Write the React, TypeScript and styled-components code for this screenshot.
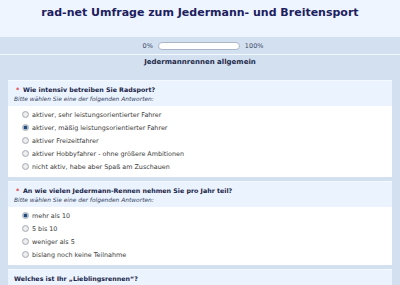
import React from "react";
import styled, { createGlobalStyle } from "styled-components";

const Global = createGlobalStyle`
  html, body { margin: 0; padding: 0; }
  body {
    background: #d3e0f0;
    font-family: "DejaVu Sans", Verdana, sans-serif;
    width: 400px;
    height: 285px;
    overflow: hidden;
  }
`;

const Header = styled.header`
  height: 37px;
  background: #eef5fe;
  display: flex;
  align-items: flex-start;
  justify-content: center;
`;

const Title = styled.h1`
  margin: 0;
  padding-top: 6px;
  font-size: 11px;
  line-height: 14px;
  font-weight: bold;
  color: #1c205e;
`;

const ProgressBand = styled.div`
  height: 17px;
  border-bottom: 1px solid #f4f8fd;
  display: flex;
  align-items: center;
  justify-content: center;
  gap: 5px;
  padding-left: 6px;
  font-size: 6.5px;
  color: #3d4a66;
`;

const Bar = styled.div`
  width: 80px;
  height: 6px;
  border: 1px solid #a9b7c9;
  border-radius: 4px;
  background: #fff;
`;

const SectionTitle = styled.div`
  height: 14px;
  line-height: 14px;
  text-align: center;
  font-size: 7px;
  font-weight: bold;
  color: #1e2a4a;
`;

const Cards = styled.div`
  padding: 11px 8px 0 8px;
  display: flex;
  flex-direction: column;
  gap: 4px;
`;

const Card = styled.section`
  background: #fff;
`;

const QHead = styled.div`
  background: #ebf4fe;
  padding: 3px 6px 2px 6px;
  border-top: 1px solid #f4f9ff;
`;

const QLine = styled.div`
  display: flex;
  align-items: center;
  height: 10px;
  font-size: 6.3px;
  font-weight: bold;
  color: #1a2346;
`;

const Star = styled.span`
  color: #e0323c;
  width: 9px;
  padding-left: 2px;
  box-sizing: border-box;
`;

const Hint = styled.div`
  height: 10px;
  line-height: 10px;
  font-size: 5.9px;
  font-style: italic;
  color: #34405c;
`;

const Body = styled.div`
  padding: 2px 0 4px 0;
`;

const Option = styled.label`
  display: flex;
  align-items: center;
  height: 13px;
  padding-left: 14px;
  gap: 3px;
  font-size: 6.4px;
  color: #3a3a3a;
`;

const Radio = styled.span<{ $on?: boolean }>`
  width: 5px;
  height: 5px;
  border-radius: 50%;
  border: 0.8px solid #a7aeb6;
  background: ${(p) =>
    p.$on
      ? "radial-gradient(circle, #244a7a 0 40%, #9fb6d0 55%, #e6eaee 100%)"
      : "radial-gradient(circle, #f0f0f0 0 30%, #d6d8da 100%)"};
  flex: none;
`;

const q1 = [
  "aktiver, sehr leistungsorientierter Fahrer",
  "aktiver, mäßig leistungsorientierter Fahrer",
  "aktiver Freizeitfahrer",
  "aktiver Hobbyfahrer - ohne größere Ambitionen",
  "nicht aktiv, habe aber Spaß am Zuschauen",
];
const q2 = ["mehr als 10", "5 bis 10", "weniger als 5", "bislang noch keine Teilnahme"];

export default function App() {
  return (
    <>
      <Global />
      <Header>
        <Title>rad-net Umfrage zum Jedermann- und Breitensport</Title>
      </Header>
      <ProgressBand>
        <span>0%</span>
        <Bar />
        <span>100%</span>
      </ProgressBand>
      <SectionTitle>Jedermannrennen allgemein</SectionTitle>
      <Cards>
        <Card>
          <QHead>
            <QLine>
              <Star>*</Star>Wie intensiv betreiben Sie Radsport?
            </QLine>
            <Hint>Bitte wählen Sie eine der folgenden Antworten:</Hint>
          </QHead>
          <Body>
            {q1.map((t, i) => (
              <Option key={t}>
                <Radio $on={i === 1} />
                {t}
              </Option>
            ))}
          </Body>
        </Card>
        <Card>
          <QHead>
            <QLine>
              <Star>*</Star>An wie vielen Jedermann-Rennen nehmen Sie pro Jahr teil?
            </QLine>
            <Hint>Bitte wählen Sie eine der folgenden Antworten:</Hint>
          </QHead>
          <Body>
            {q2.map((t, i) => (
              <Option key={t}>
                <Radio $on={i === 0} />
                {t}
              </Option>
            ))}
          </Body>
        </Card>
        <Card>
          <QHead>
            <QLine>Welches ist Ihr „Lieblingsrennen“?</QLine>
          </QHead>
        </Card>
      </Cards>
    </>
  );
}
